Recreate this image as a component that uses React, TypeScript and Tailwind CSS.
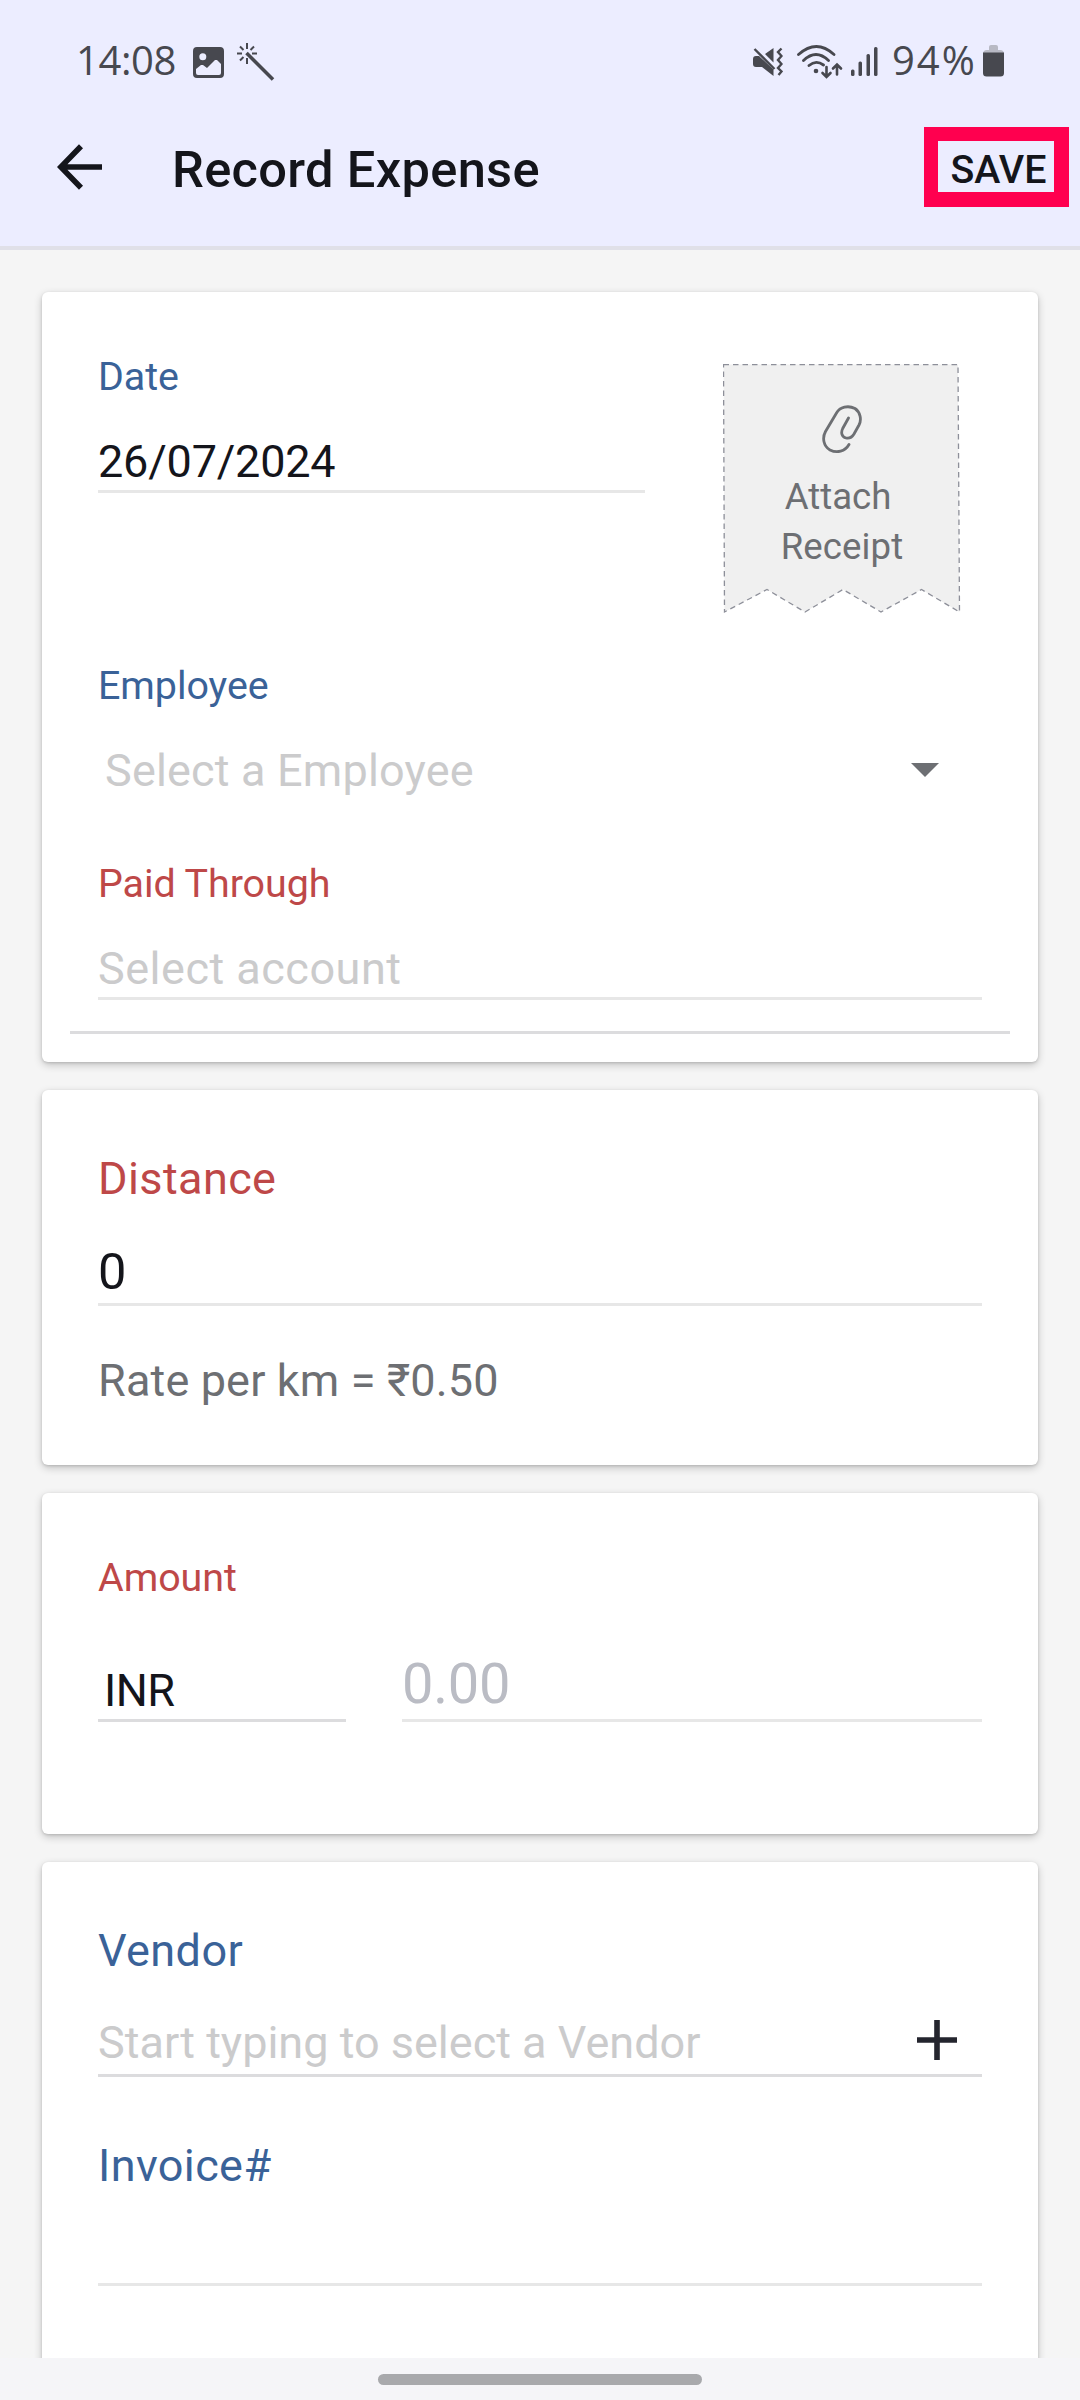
import React from 'react';

const colors = {
  optional: 'text-[#3a6298]',
  required: 'text-[#be4848]',
};

const ImageIcon: React.FC = () => (
  <svg width="31" height="31" viewBox="0 0 31 31" className="ml-[19px]">
    <path
      fill="#47484f"
      fillRule="evenodd"
      d="M4 0h23a4 4 0 0 1 4 4v23a4 4 0 0 1-4 4H4a4 4 0 0 1-4-4V4a4 4 0 0 1 4-4zM3 22v4a2 2 0 0 0 2 2h21a2 2 0 0 0 2-2v-9l-4-4h-2l-8 8-4-3H8zM9.8 6.2a3.5 3.5 0 1 0 0 7 3.5 3.5 0 0 0 0-7z"
    />
  </svg>
);

const WandIcon: React.FC = () => (
  <svg width="40" height="40" viewBox="0 0 40 40" fill="none" stroke="#47484f" className="ml-3">
    <path strokeWidth="3.6" d="M10.5 10l26.500 26.500" />
    <path strokeWidth="2" d="M11 0v6M11 15v6M1 10.500h5M16 10.500h5M4 3.500l3.500 3.500M18 3.500l-3.500 3.500M4 17.500l3.500-3.500" />
  </svg>
);

const MuteVibrateIcon: React.FC = () => (
  <svg width="30" height="30" viewBox="0 0 30 30">
    <path fill="#47484f" d="M20.500 1v14.500L12 7zM0 12q0-3 3-3h3l14.500 13.500V29L9 20H3q-3 0-3-3z" />
    <path fill="none" stroke="#47484f" strokeWidth="2.400" d="M1.500 2l20 20M28.500 1.500l-3.500 3.500 3.500 4-3.500 4 3.500 4-3.500 4 3.500 3.500-3 3.500" />
  </svg>
);

const WifiIcon: React.FC = () => (
  <svg width="46" height="34" viewBox="0 0 46 34" fill="none" stroke="#47484f" strokeLinecap="round">
    <path strokeWidth="2.800" d="M1.500 9.500Q19.500-6.500 37 9.500M6.500 15.500Q19 3.500 31.500 15.500M12 20.500Q19 14.500 26.500 20" />
    <circle cx="19" cy="26" r="2.300" fill="#47484f" stroke="none" />
    <path strokeWidth="2.600" d="M29.500 22v9M25.500 28l4 4 4-4M40 29.500V20M36 23.500l4-4 4 4" />
  </svg>
);

const SignalIcon: React.FC = () => (
  <svg width="28" height="30" viewBox="0 0 28 30" fill="#47484f">
    <rect x="0" y="22.500" width="3.500" height="6.500" rx="1.500" />
    <rect x="7.500" y="14.500" width="3.500" height="14.500" rx="1.500" />
    <rect x="15.500" y="7" width="3.500" height="22" rx="1.500" />
    <rect x="23" y="0" width="3.500" height="29" rx="1.500" />
  </svg>
);

const BatteryIcon: React.FC = () => (
  <svg width="21" height="32" viewBox="0 0 21 32">
    <path fill="#b8b9c4" d="M6 2q0-2 2-2h5q2 0 2 2v3h2q4 0 4 4H0q0-4 4-4h2z" />
    <path fill="#47484f" d="M0 7.500h21V28q0 3.500-3.500 3.500h-14Q0 31.500 0 28z" />
  </svg>
);

const BackIcon: React.FC = () => (
  <svg width="46" height="46" viewBox="0 0 46 46" fill="none" stroke="#14151b" strokeWidth="5.600">
    <path d="M24 2.300L3.800 23 24 43.700M4 23h41" />
  </svg>
);

const PaperclipIcon: React.FC = () => (
  <svg width="40" height="49" viewBox="0 0 40 49" fill="none" stroke="#6d6f73" strokeWidth="2.800" strokeLinecap="round">
    <path d="M26.500 13L20.700 23.500C18.500 28 20 32 24 33Q29 34 32 29L37 20C40 14 38 7 33 3.500C26 0 18 2 14.500 8L3.500 26.500C0 33 1.500 41 8 45C15 48.500 23 46.500 27 39.500" />
  </svg>
);

const StatusBar: React.FC = () => (
  <div className="flex h-[82px] items-start justify-between pt-[35px] pr-[76px] pl-[76px] font-['Open_Sans',sans-serif] text-[40px] leading-[52px] text-[#47484f]">
    <div className="flex items-start">
      <span className="-mt-px w-[98px] tracking-[-0.4px] whitespace-nowrap">14:08</span>
      <div className="flex pt-3">
        <ImageIcon />
      </div>
      <div className="flex pt-2">
        <WandIcon />
      </div>
    </div>
    <div className="flex items-start">
      <div className="flex pt-3">
        <MuteVibrateIcon />
      </div>
      <div className="ml-3.5 flex pt-2.5">
        <WifiIcon />
      </div>
      <div className="ml-2 flex pt-3">
        <SignalIcon />
      </div>
      <span className="-mt-px ml-[13px] w-[85px] tracking-[2px] whitespace-nowrap">94%</span>
      <div className="ml-1.5 flex pt-2.5">
        <BatteryIcon />
      </div>
    </div>
  </div>
);

const AppBar: React.FC = () => (
  <div className="flex h-[164px] items-start pl-[57px]">
    <div className="pt-[62px]">
      <BackIcon />
    </div>
    <h1 className="mt-[58px] ml-[69px] text-[50.6px] leading-[60px] font-medium tracking-[0.32px] whitespace-nowrap text-[#14151b]">
      Record Expense
    </h1>
    <button className="mt-[45px] mr-[11px] ml-auto h-[80px] w-[145px] border-t-14 border-r-15 border-b-15 border-l-14 border-[#ff004f] pt-0.5 pl-[5px] text-[39.4px] leading-[54px] font-medium whitespace-nowrap text-[#14151b]">
      SAVE
    </button>
  </div>
);

const Card: React.FC<{ className: string; children: React.ReactNode }> = ({ className, children }) => (
  <section className={`mx-[42px] rounded-[6px] bg-white px-[56px] shadow-[0_3px_8px_rgba(0,0,0,0.2),0_1px_3px_rgba(0,0,0,0.14)] ${className}`}>
    {children}
  </section>
);

// Small labels are 14sp, the larger ones 16sp
const Label: React.FC<{ text: string; required?: boolean; large?: boolean }> = ({ text, required, large }) => (
  <div
    className={`whitespace-nowrap ${required ? colors.required : colors.optional} ${
      large ? 'h-[54px] text-[45px] leading-[54px] tracking-[0.4px]' : 'h-[46px] text-[39.4px] leading-[48px] tracking-[-0.05px]'
    }`}
  >
    {text}
  </div>
);

const AttachReceipt: React.FC = () => (
  <div className="relative mt-[72px] mr-[21px] h-[250px] w-[238px]">
    <svg width="238" height="250" viewBox="0 0 238 250" className="absolute inset-0">
      <path
        d="M0.500 0.500H235L236.500 248L198.500 225.500L158 248L120 225.500L82 248L44 225.500L1.500 248Z"
        fill="#f0f0f0"
        stroke="#8d8f99"
        strokeWidth="1.300"
        strokeDasharray="5.500 4"
      />
    </svg>
    <div className="relative flex flex-col items-center pt-[41px] text-[36.6px] leading-[50px] text-[#6d6f73]">
      <PaperclipIcon />
      <span className="mt-[18px] mr-2 h-[50px]">Attach</span>
      <span className="h-[50px] tracking-[0.1px]">Receipt</span>
    </div>
  </div>
);

const App: React.FC = () => {
  return (
    <div className="flex h-[2400px] w-[1080px] flex-col overflow-hidden bg-[#f5f5f5] font-['Roboto',sans-serif]">
      <header className="h-[250px] shrink-0 border-b-4 border-[#e0e0e8] bg-[#ecedff]">
        <StatusBar />
        <AppBar />
      </header>

      <main className="flex h-[2108px] shrink-0 flex-col overflow-hidden pt-[42px]">
        <Card className="h-[770px] shrink-0">
          <div className="flex h-[370px] justify-between">
            <div className="w-[547px] pt-[61px]">
              <Label text="Date" />
              <div className="mt-[36px] h-[58px] border-b-3 border-[#e7e7e7] text-[45px] leading-[54px] tracking-[-0.2px] text-[#14151b]">
                26/07/2024
              </div>
            </div>
            <AttachReceipt />
          </div>
          <Label text="Employee" />
          <div className="mt-[35px] flex h-[54px] items-center justify-between pr-[43px] pl-[7px] text-[45px] leading-[54px] tracking-[0.18px] text-[#cbcbcc]">
            <span className="mt-0.5">Select a Employee</span>
            <svg width="28" height="14" viewBox="0 0 28 14">
              <path d="M0 0h28L14 14z" fill="#6d6f73" />
            </svg>
          </div>
          <div className="mt-[63px]">
            <Label text="Paid Through" required />
          </div>
          <div className="mt-[35px] h-[59px] border-b-3 border-[#e7e7e7] text-[45px] leading-[56px] tracking-[0.5px] text-[#cbcbcc]">
            Select account
          </div>
          <div className="-mx-7 mt-[31px] h-[3px] bg-[#dcdcde]" />
        </Card>

        <Card className="mt-[28px] h-[375px] shrink-0 pt-[62px]">
          <Label text="Distance" required large />
          <div className="mt-[36px] h-[64px] border-b-3 border-[#e7e7e7] text-[50.6px] leading-[60px] text-[#14151b]">0</div>
          <div className="mt-[48px] text-[45px] leading-[54px] tracking-[0.15px] whitespace-nowrap text-[#6d6f73]">
            Rate per km = ₹0.50
          </div>
        </Card>

        <Card className="mt-[28px] h-[341px] shrink-0 pt-[61px]">
          <Label text="Amount" required />
          <div className="mt-[51px] flex h-[71px] items-end justify-between">
            <div className="h-[58px] w-[248px] border-b-3 border-[#dcdcde] pl-[6px] text-[45px] leading-[54px] tracking-[-0.5px] text-[#14151b]">
              INR
            </div>
            <div className="h-[71px] w-[580px] border-b-3 border-[#e7e7e7] text-[56px] leading-[66px] tracking-[-0.2px] text-[#babcc4]">
              0.00
            </div>
          </div>
        </Card>

        <Card className="mt-[28px] h-[520px] shrink-0 pt-[62px]">
          <Label text="Vendor" large />
          <div className="mt-[38px] flex h-[61px] items-start justify-between border-b-3 border-[#dcdcde] pr-[25px] text-[45px] leading-[54px] text-[#cbcbcc]">
            <span>Start typing to select a Vendor</span>
            <svg width="40" height="40" viewBox="0 0 40 40" className="mt-1" stroke="#24252e" strokeWidth="5.600">
              <path d="M20 0v40M0 20h40" />
            </svg>
          </div>
          <div className="mt-[62px]">
            <Label text="Invoice#" large />
          </div>
          <div className="mt-[90px] h-[3px] bg-[#e7e7e7]" />
        </Card>
      </main>

      <footer className="flex h-[42px] shrink-0 justify-center bg-[#f5f5f8] pt-4">
        <div className="h-[11px] w-[324px] rounded-full bg-[#a8a9ac]" />
      </footer>
    </div>
  );
};

export default App;
